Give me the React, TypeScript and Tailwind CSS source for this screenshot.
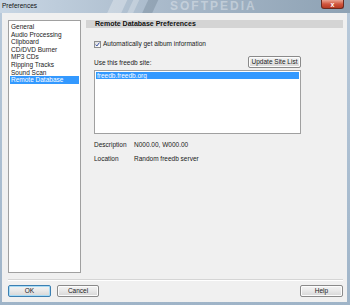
import React from 'react';

const categories = [
  'General',
  'Audio Processing',
  'Clipboard',
  'CD/DVD Burner',
  'MP3 CDs',
  'Ripping Tracks',
  'Sound Scan',
  'Remote Database',
];

const font = { fontFamily: '"Liberation Sans", Arial, sans-serif' };

const WinButton: React.FC<{ label: string; width: string; isDefault?: boolean }> = ({ label, width, isDefault }) => (
  <div
    className={`${width} h-[12px] flex items-center justify-center rounded-[2px] border text-[6.5px] leading-none text-[#1a1a1a] bg-gradient-to-b from-[#f4f4f4] via-[#e8e8e8] to-[#d6d6d6] ${
      isDefault ? 'border-[#3c7fb1] shadow-[inset_0_0_0_1px_#a9dcf6]' : 'border-[#8a8a8a] shadow-[inset_0_0_0_1px_#fcfcfc]'
    }`}
  >
    {label}
  </div>
);

export default function App() {
  return (
    <div
      className="relative w-[350px] h-[305px] overflow-hidden flex flex-col bg-gradient-to-b from-[#b9cadb] to-[#9fb4c8]"
      style={font}
    >
      {/* 标题栏 */}
      <div className="relative h-[13px] flex items-center pl-[2px] overflow-hidden bg-gradient-to-r from-[#c8d6e4] via-[#a7b8c9] to-[#8ea2b4]">
        <div className="absolute left-[110px] top-[-6px] w-[14px] h-[26px] bg-white/30 skew-x-[-25deg]" />
        <div className="absolute left-[130px] top-[-6px] w-[6px] h-[26px] bg-white/25 skew-x-[-25deg]" />
        <div className="absolute left-[145px] top-[-6px] w-[10px] h-[26px] bg-[#5d6f80]/30 skew-x-[-25deg]" />
        <span className="absolute left-[170px] top-[0px] text-[12px] font-bold tracking-[2px] text-white/35 leading-none">
          SOFTPEDIA
        </span>
        <span className="relative text-[6.5px] text-[#111] leading-none">Preferences</span>
        <div className="absolute right-[6px] top-0 w-[23px] h-[9px] rounded-b-[3px] border border-t-0 border-[#6b2a20] bg-gradient-to-b from-[#e8a493] via-[#d1553e] to-[#b53a22] flex items-center justify-center">
          <span className="text-white text-[7px] font-bold leading-none">x</span>
        </div>
      </div>

      {/* 内容区 */}
      <div className="flex-1 ml-[2px] mr-[3px] mb-[3px] bg-[#f0f0f0] pl-[6px] pr-[4px] pt-[7px] flex flex-col">
        <div className="flex gap-[5px]">
          {/* 分类列表 */}
          <div className="w-[73px] h-[253px] border border-[#a0a0a0] bg-white pt-[2px] px-[1px]">
            {categories.map((c) => (
              <div
                key={c}
                className={`h-[7.6px] pl-[1px] text-[6.5px] leading-[7.6px] whitespace-nowrap ${
                  c === 'Remote Database' ? 'bg-[#3399ff] text-white' : 'text-[#1a1a1a]'
                }`}
              >
                {c}
              </div>
            ))}
          </div>

          {/* 右侧面板 */}
          <div className="flex-1 flex flex-col">
            <div className="h-[8px] bg-[#d4d4d4] pl-[9px] text-[7px] font-bold leading-[8px] text-[#111]">
              Remote Database Preferences
            </div>

            <div className="pl-[8px] w-[215px] flex flex-col">
              <div className="mt-[13px] h-[7px] flex items-center gap-[2px]">
                <div className="w-[7px] h-[7px] border border-[#8e8f8f] bg-gradient-to-br from-[#dcdcdc] to-[#ffffff] flex items-center justify-center">
                  <svg width="5" height="5" viewBox="0 0 5 5">
                    <path d="M0.6 2.6 L1.9 4 L4.4 0.6" fill="none" stroke="#3a53a4" strokeWidth="1" />
                  </svg>
                </div>
                <span className="text-[6.5px] leading-none text-[#1a1a1a]">Automatically get album information</span>
              </div>

              <div className="mt-[8px] flex items-end justify-between">
                <span className="text-[6.5px] leading-none text-[#1a1a1a] mb-[2px]">Use this freedb site:</span>
                <WinButton label="Update Site List" width="w-[53px]" />
              </div>

              <div className="mt-[2px] h-[64px] border border-[#a0a0a0] bg-white p-[1px]">
                <div className="h-[7px] bg-[#3399ff] text-white text-[6.5px] leading-[7px] pl-[1px]">freedb.freedb.org</div>
              </div>

              <div className="mt-[7px] h-[8px] flex items-center text-[6.5px] leading-none text-[#1a1a1a]">
                <span className="w-[40px]">Description</span>
                <span>N000.00, W000.00</span>
              </div>
              <div className="mt-[6px] h-[8px] flex items-center text-[6.5px] leading-none text-[#1a1a1a]">
                <span className="w-[40px]">Location</span>
                <span>Random freedb server</span>
              </div>
            </div>
          </div>
        </div>

        {/* 分隔线 */}
        <div className="mt-[6px] h-[1px] bg-[#d5d5d5]" />
        <div className="h-[1px] bg-white" />

        {/* 底部按钮 */}
        <div className="mt-[4px] flex items-center gap-[6px]">
          <WinButton label="OK" width="w-[43px]" isDefault />
          <WinButton label="Cancel" width="w-[42px]" />
          <div className="flex-1" />
          <WinButton label="Help" width="w-[43px]" />
        </div>
      </div>
    </div>
  );
}
